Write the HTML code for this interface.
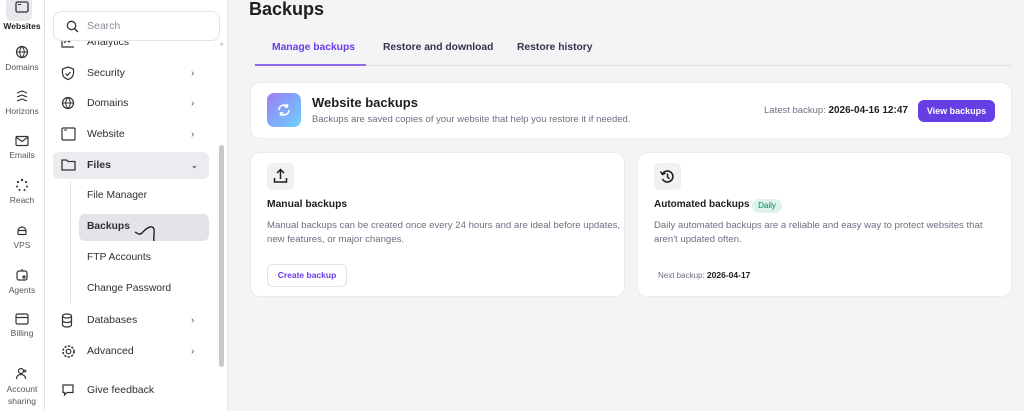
<!DOCTYPE html>
<html><head><style>
*{box-sizing:border-box;margin:0;padding:0}
body{width:1024px;height:411px;overflow:hidden;background:#f4f4f6;font-family:"Liberation Sans",sans-serif;color:#1d1e20;position:relative}
.abs{position:absolute}
.rail{left:0;top:0;width:45px;height:411px;background:#fff;border-right:1px solid #e4e4e8}
.ri{position:absolute;left:0;width:44px;text-align:center;font-size:8.5px;color:#555}
.ri svg{display:block;margin:0 auto 3px}
.side{left:45px;top:0;width:183px;height:411px;background:#fff;border-right:1px solid #e6e6ea}
.it{position:absolute;left:53px;width:156px;height:27px;font-size:10.5px;color:#2f2f33;line-height:27px}
.it .tx{position:absolute;left:34px}
.it .ch{position:absolute;left:138px;color:#555;font-size:10px}
.it svg{position:absolute;left:8px;top:6px}
.sub{position:absolute;left:87px;font-size:10.3px;color:#2f2f33}
.card{background:#fff;border-radius:10px;border:1px solid #ebebef}
.gray{color:#6d7081}
</style></head><body>
<div class="abs rail">
 <div class="abs" style="left:6px;top:-4px;width:26px;height:25px;background:#e8e8ec;border-radius:6px"></div>
 <div class="ri" style="top:0"><svg width="14" height="12" viewBox="0 0 14 12" style="margin-top:1px"><rect x="1" y="1" width="12" height="10" rx="1.5" fill="none" stroke="#333" stroke-width="1.3"/><path d="M3 3.5h3" stroke="#333"/></svg></div>
 <div class="ri" style="top:21px;font-weight:bold;color:#1d1e20">Websites</div>
 <div class="ri" style="top:45px"><svg width="14" height="14" viewBox="0 0 14 14"><circle cx="7" cy="7" r="5.5" fill="none" stroke="#333" stroke-width="1.2"/><path d="M1.5 7h11M7 1.5c-3 3-3 8 0 11M7 1.5c3 3 3 8 0 11" fill="none" stroke="#333"/></svg>Domains</div>
 <div class="ri" style="top:89px"><svg width="14" height="14" viewBox="0 0 14 14"><path d="M2 4l5-2 5 2M2 8l5-2 5 2M2 12l5-2 5 2" fill="none" stroke="#333" stroke-width="1.2"/></svg>Horizons</div>
 <div class="ri" style="top:135px"><svg width="14" height="12" viewBox="0 0 14 12"><rect x="1" y="1.5" width="12" height="9" rx="1" fill="none" stroke="#333" stroke-width="1.2"/><path d="M1 2l6 4.5 6-4.5" fill="none" stroke="#333" stroke-width="1.2"/></svg>Emails</div>
 <div class="ri" style="top:178px"><svg width="14" height="14" viewBox="0 0 14 14" fill="#333"><circle cx="7" cy="2" r="1.2"/><circle cx="11" cy="4" r="1.1"/><circle cx="12" cy="8.5" r="1"/><circle cx="3" cy="4" r="1.1"/><circle cx="2" cy="8.5" r="1"/><circle cx="4.5" cy="12" r="1"/><circle cx="9.5" cy="12" r="1"/></svg>Reach</div>
 <div class="ri" style="top:223px"><svg width="14" height="14" viewBox="0 0 14 14"><path d="M3 8a4 4 0 0 1 8 0" fill="none" stroke="#333" stroke-width="1.2"/><rect x="3" y="7.5" width="8" height="4" rx="1" fill="none" stroke="#333" stroke-width="1.2"/></svg>VPS</div>
 <div class="ri" style="top:268px"><svg width="14" height="14" viewBox="0 0 14 14"><rect x="2" y="3" width="10" height="9" rx="2" fill="none" stroke="#333" stroke-width="1.2"/><path d="M7 1v2M9 7v4M7 9h4" stroke="#333" stroke-width="1.2"/></svg>Agents</div>
 <div class="ri" style="top:313px"><svg width="14" height="12" viewBox="0 0 14 12"><rect x="1" y="1" width="12" height="10" rx="1.5" fill="none" stroke="#333" stroke-width="1.2"/><path d="M1 4.5h12" stroke="#333" stroke-width="1.2"/></svg>Billing</div>
 <div class="ri" style="top:367px;line-height:12px"><svg width="14" height="13" viewBox="0 0 14 13"><circle cx="6" cy="4" r="2.5" fill="none" stroke="#333" stroke-width="1.2"/><path d="M1.5 12c0-3 2-4.5 4.5-4.5S10.5 9 10.5 12M10 2.5v3M8.5 4h3" fill="none" stroke="#333" stroke-width="1.2"/></svg>Account<br>sharing</div>
</div>
<div class="abs side"></div>
<div class="it" style="top:29px"><svg width="14" height="13" viewBox="0 0 14 13"><path d="M1 1v11h12M3 8l3-3 2 2 4-4" fill="none" stroke="#333" stroke-width="1.2"/></svg><span class="tx">Analytics</span></div>
<div class="abs" style="left:53px;top:11px;width:167px;height:30px;background:#fff;border:1px solid #e4e4e8;border-radius:8px;font-size:10.5px;color:#8a8c99;line-height:28px;padding-left:33px">Search
 <svg class="abs" style="left:12px;top:8px" width="13" height="13" viewBox="0 0 13 13"><circle cx="5.5" cy="5.5" r="4.2" fill="none" stroke="#333" stroke-width="1.3"/><path d="M8.5 8.5l3.5 3.5" stroke="#333" stroke-width="1.3"/></svg></div>
<div class="it" style="top:60px"><svg width="14" height="15" viewBox="0 0 14 15"><path d="M7 1l5.5 2v4c0 3.5-2.5 5.5-5.5 6.5C4 12.5 1.5 10.5 1.5 7V3z" fill="none" stroke="#333" stroke-width="1.2"/><path d="M4.5 7.5l2 2 3-3.5" fill="none" stroke="#333" stroke-width="1.2"/></svg><span class="tx">Security</span><span class="ch">›</span></div>
<div class="it" style="top:90px"><svg width="14" height="14" viewBox="0 0 14 14"><circle cx="7" cy="7" r="5.5" fill="none" stroke="#333" stroke-width="1.2"/><path d="M1.5 7h11M7 1.5c-3 3-3 8 0 11M7 1.5c3 3 3 8 0 11" fill="none" stroke="#333"/></svg><span class="tx">Domains</span><span class="ch">›</span></div>
<div class="it" style="top:121px"><svg width="15" height="14" viewBox="0 0 15 14"><rect x="1" y="1" width="13" height="12" rx="1" fill="none" stroke="#333" stroke-width="1.2"/><path d="M3 3h3" stroke="#333"/></svg><span class="tx">Website</span><span class="ch">›</span></div>
<div class="it" style="top:152px;background:#ececf0;border-radius:6px;font-weight:bold"><svg width="15" height="13" viewBox="0 0 15 13"><path d="M1 2h4.5l1.5 1.5h7v8.5H1z" fill="none" stroke="#333" stroke-width="1.3"/></svg><span class="tx">Files</span><span class="ch" style="font-size:8px">⌄</span></div>
<div class="abs" style="left:70px;top:181px;width:1px;height:122px;background:#e2e2e6"></div>
<div class="sub" style="top:190px">File Manager</div>
<div class="abs" style="left:79px;top:214px;width:130px;height:27px;background:#e4e4e8;border-radius:6px"></div>
<div class="sub" style="top:221px;font-weight:bold">Backups</div>
<svg class="abs" style="left:132px;top:220px" width="45" height="24" viewBox="0 0 45 24"><path d="M3 12c3 2 5 3 7 1s6-7 10-6 1 9 2 14" fill="none" stroke="#111" stroke-width="1.3"/></svg>
<div class="sub" style="top:252px">FTP Accounts</div>
<div class="sub" style="top:283px">Change Password</div>
<div class="it" style="top:307px"><svg width="12" height="15" viewBox="0 0 12 15"><ellipse cx="6" cy="3" rx="4.5" ry="2" fill="none" stroke="#333" stroke-width="1.2"/><path d="M1.5 3v9c0 1.1 2 2 4.5 2s4.5-.9 4.5-2V3M1.5 7.5c0 1.1 2 2 4.5 2s4.5-.9 4.5-2" fill="none" stroke="#333" stroke-width="1.2"/></svg><span class="tx">Databases</span><span class="ch">›</span></div>
<div class="it" style="top:338px"><svg width="15" height="15" viewBox="0 0 15 15"><circle cx="7.5" cy="7.5" r="2.3" fill="none" stroke="#333" stroke-width="1.2"/><circle cx="7.5" cy="7.5" r="5.5" fill="none" stroke="#333" stroke-width="1.6" stroke-dasharray="2.2 1.4"/></svg><span class="tx">Advanced</span><span class="ch">›</span></div>
<div class="it" style="top:377px"><svg width="14" height="14" viewBox="0 0 14 14"><path d="M2 2h10v7.5H6L3.5 12V9.5H2z" fill="none" stroke="#333" stroke-width="1.2"/></svg><span class="tx">Give feedback</span></div>
<div class="abs" style="left:219px;top:145px;width:5px;height:222px;background:#c8c8cc;border-radius:3px"></div>
<div class="abs" style="left:220px;top:43px;font-size:7px;color:#888">^</div>

<div class="abs" style="left:249px;top:-1px;font-size:18px;font-weight:bold">Backups</div>
<div class="abs" style="left:272px;top:42px;font-size:10.3px;font-weight:bold;color:#673de6">Manage backups</div>
<div class="abs" style="left:383px;top:42px;font-size:10.3px;font-weight:bold;color:#36344d">Restore and download</div>
<div class="abs" style="left:517px;top:42px;font-size:10.3px;font-weight:bold;color:#36344d">Restore history</div>
<div class="abs" style="left:255px;top:65px;width:757px;height:1px;background:#e2e2e6"></div>
<div class="abs" style="left:255px;top:64px;width:111px;height:2px;background:#8c6ae8"></div>

<div class="abs card" style="left:250px;top:82px;width:762px;height:57px"></div>
<div class="abs" style="left:267px;top:93px;width:34px;height:34px;border-radius:7px;background:linear-gradient(135deg,#9a7cf5,#6cd2ff)"><svg class="abs" style="left:9px;top:9px" width="16" height="16" viewBox="0 0 16 16"><path d="M3 8a5 5 0 0 1 8.5-3.5M13 8a5 5 0 0 1-8.5 3.5" fill="none" stroke="#fff" stroke-width="1.6"/><path d="M11.5 2v3h-3M4.5 14v-3h3" fill="none" stroke="#fff" stroke-width="1.4"/></svg></div>
<div class="abs" style="left:312px;top:95px;font-size:13px;font-weight:bold">Website backups</div>
<div class="abs gray" style="left:312px;top:114px;font-size:9.5px">Backups are saved copies of your website that help you restore it if needed.</div>
<div class="abs gray" style="left:764px;top:105px;font-size:9.5px">Latest backup: <b style="color:#1d1e20;font-size:10px">2026-04-16 12:47</b></div>
<div class="abs" style="left:918px;top:100px;width:77px;height:22px;border-radius:6px;background:#673de6;color:#fff;font-size:9px;font-weight:bold;text-align:center;line-height:22px">View backups</div>

<div class="abs card" style="left:250px;top:152px;width:375px;height:145px"></div>
<div class="abs" style="left:267px;top:163px;width:27px;height:27px;border-radius:5px;background:#f1f1f4"><svg class="abs" style="left:6px;top:5px" width="15" height="16" viewBox="0 0 15 16"><path d="M7.5 11V2M4 5l3.5-3.5L11 5M1.5 10v4h12v-4" fill="none" stroke="#1d1e20" stroke-width="1.5"/></svg></div>
<div class="abs" style="left:267px;top:199px;font-size:10.3px;font-weight:bold">Manual backups</div>
<div class="abs gray" style="left:267px;top:219px;font-size:9.6px;line-height:14px;width:355px">Manual backups can be created once every 24 hours and are ideal before updates, new features, or major changes.</div>
<div class="abs" style="left:267px;top:264px;width:80px;height:23px;border:1px solid #e2e2e6;border-radius:6px;color:#673de6;font-size:8.5px;font-weight:bold;text-align:center;line-height:21px">Create backup</div>

<div class="abs card" style="left:637px;top:152px;width:375px;height:145px"></div>
<div class="abs" style="left:654px;top:163px;width:27px;height:27px;border-radius:5px;background:#f1f1f4"><svg class="abs" style="left:5px;top:5px" width="17" height="17" viewBox="0 0 17 17"><path d="M3.5 6A5.5 5.5 0 1 1 3.5 11" fill="none" stroke="#1d1e20" stroke-width="1.6"/><path d="M1.5 3.5L3.5 6.5 6.5 5" fill="none" stroke="#1d1e20" stroke-width="1.5"/><path d="M8.5 5.5v3.5l2 2" fill="none" stroke="#1d1e20" stroke-width="1.5"/></svg></div>
<div class="abs" style="left:654px;top:199px;font-size:10px;font-weight:bold">Automated backups</div>
<div class="abs" style="left:752px;top:199px;width:30px;height:14px;border-radius:7px;background:#def4ea;color:#00805a;font-size:8px;text-align:center;line-height:14px">Daily</div>
<div class="abs gray" style="left:654px;top:219px;font-size:9.6px;line-height:14px;width:345px">Daily automated backups are a reliable and easy way to protect websites that aren't updated often.</div>
<div class="abs gray" style="left:658px;top:270px;font-size:8px">Next backup: <b style="color:#1d1e20;font-size:8.5px">2026-04-17</b></div>
</body></html>
